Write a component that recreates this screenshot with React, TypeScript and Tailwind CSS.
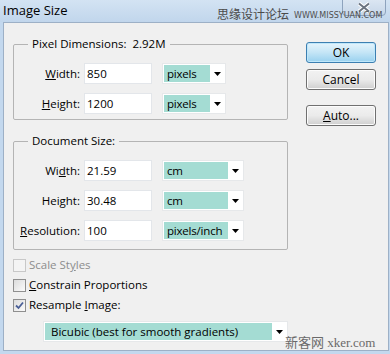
import React from "react";

const font = { fontFamily: '"Open Sans", "Noto Sans CJK SC", sans-serif' };

function Input({ value }: { value: string }) {
  return (
    <div className="w-[68px] h-[21px] bg-white border border-[#e3e6ea] flex items-center pl-[2px] text-[11.5px] text-black leading-none">
      {value}
    </div>
  );
}

function Arrow() {
  return (
    <svg width="7" height="4" viewBox="0 0 7 4" className="block">
      <path d="M0 0H7L3.5 4Z" fill="#000" />
    </svg>
  );
}

function Select({ value, w, tealW }: { value: string; w: string; tealW: string }) {
  return (
    <div className={`${w} h-[21px] bg-white border border-[#e6e8ea] flex items-center p-[1px]`}>
      <div className={`${tealW} h-full bg-[#a4dcd3] flex items-center pl-[3px] text-[11.5px] tracking-[-0.2px] text-black leading-none whitespace-nowrap overflow-hidden`}>
        {value}
      </div>
      <div className="flex-1 flex justify-center items-center pt-[1px]">
        <Arrow />
      </div>
    </div>
  );
}

function Row({ label, value, unit, sw, tw }: { label: React.ReactNode; value: string; unit: string; sw: string; tw: string }) {
  return (
    <div className="flex items-center h-[21px]">
      <div className="w-[70px] text-right text-[11.5px] text-black pr-[4px]">{label}</div>
      <Input value={value} />
      <div className="w-[10px]" />
      <Select value={unit} w={sw} tealW={tw} />
    </div>
  );
}

function Group({ title, children, pb }: { title: string; children: React.ReactNode; pb: string }) {
  return (
    <fieldset className={`w-[275px] border border-[#b4b4b4] rounded-[2px] px-0 ${pb}`}>
      <legend className="ml-[14px] px-[4px] text-[11.5px] leading-[16px] text-black whitespace-pre">{title}</legend>
      <div className="flex flex-col gap-[9px] mt-[11px]">{children}</div>
    </fieldset>
  );
}

function Check({ checked, disabled, children }: { checked?: boolean; disabled?: boolean; children: React.ReactNode }) {
  return (
    <div className="flex items-center h-[20px]">
      <div
        className={`w-[13px] h-[13px] border ${disabled ? "border-[#c8c8c8] bg-[#f4f4f4]" : "border-[#8f8f8f] bg-gradient-to-br from-[#dcdcdc] to-[#fbfbfb]"} flex items-center justify-center`}
      >
        {checked && (
          <svg width="9" height="9" viewBox="0 0 9 9">
            <path d="M1 4.5L3.5 7L8 1.5" stroke="#4a5f97" strokeWidth="1.8" fill="none" />
          </svg>
        )}
      </div>
      <span className={`ml-[3px] text-[11.5px] ${disabled ? "text-[#8d8d8d]" : "text-black"}`}>{children}</span>
    </div>
  );
}

function Btn({ children, def }: { children: React.ReactNode; def?: boolean }) {
  return (
    <div
      className={`w-[70px] h-[21px] rounded-[3px] border flex items-center justify-center text-[12px] text-black ${
        def
          ? "border-[#3c7fb1] bg-gradient-to-b from-[#e5f4fc] via-[#c4e5f6] to-[#98d1ef] shadow-[inset_0_0_0_1px_#bfe7fa]"
          : "border-[#707070] bg-gradient-to-b from-[#f2f2f2] via-[#ebebeb] to-[#cfcfcf] shadow-[inset_0_0_0_1px_#fcfcfc]"
      }`}
    >
      {children}
    </div>
  );
}

export default function App() {
  return (
    <div className="w-[390px] h-[354px] bg-[#c3d8ee] relative overflow-hidden" style={font}>
      {/* title bar */}
      <div className="h-[22px] flex items-start bg-gradient-to-b from-[#d3e3f3] to-[#c1d6ec] relative">
        <span className="ml-[3px] mt-[1px] text-[13px] text-black leading-[18px]">Image Size</span>
        <div className="absolute right-[4px] top-[-1px] w-[44px] h-[17px] rounded-b-[4px] border border-[#8ea3bd] bg-gradient-to-b from-[#dbe6f2] to-[#c6d6e8] flex items-center justify-center">
          <svg width="14" height="11" viewBox="0 0 14 11">
            <path d="M2 1.5L12 9.5M12 1.5L2 9.5" stroke="#fff" strokeWidth="4" />
            <path d="M2 1.5L12 9.5M12 1.5L2 9.5" stroke="#6b7480" strokeWidth="2" />
          </svg>
        </div>
        <div className="absolute left-[217px] top-[5px] flex items-start z-10">
          <span className="text-[12px] text-[#4a4a4a] leading-[18px]" style={{ fontFamily: '"Noto Sans CJK SC", sans-serif' }}>
            思缘设计论坛
          </span>
          <span className="mt-[5px] ml-[5px] text-[8px] text-[#4e4e4e] leading-[12px]" style={{ fontFamily: '"DejaVu Sans", sans-serif' }}>
            WWW.MISSYUAN.COM
          </span>
        </div>
      </div>
      {/* body */}
      <div className="ml-[3px] w-[386px] h-[329px] border border-[#9db0c6] bg-[#f0f0f0] flex">
        <div className="pl-[9px] pt-[13px] flex flex-col">
          <Group title="Pixel Dimensions:  2.92M" pb="pb-[5px]">
            <Row label={<><u>W</u>idth:</>} value="850" unit="pixels" sw="w-[64px]" tw="w-[46px]" />
            <Row label={<><u>H</u>eight:</>} value="1200" unit="pixels" sw="w-[64px]" tw="w-[46px]" />
          </Group>
          <div className="h-[13px]" />
          <Group title="Document Size:" pb="pb-[8px]">
            <Row label={<>Wi<u>d</u>th:</>} value="21.59" unit="cm" sw="w-[82px]" tw="w-[64px]" />
            <Row label={<>Hei<u>g</u>ht:</>} value="30.48" unit="cm" sw="w-[82px]" tw="w-[64px]" />
            <Row label={<><u>R</u>esolution:</>} value="100" unit="pixels/inch" sw="w-[82px]" tw="w-[64px]" />
          </Group>
          <div className="mt-[5px] flex flex-col">
            <Check disabled>
              Scale St<u>y</u>les
            </Check>
            <Check>
              <u>C</u>onstrain Proportions
            </Check>
            <Check checked>
              Resample <u>I</u>mage:
            </Check>
          </div>
          <div className="mt-[6px] ml-[30px]">
            <div className="w-[245px] h-[21px] bg-white border border-[#e6e8ea] flex items-center p-[1px]">
              <div className="w-[227px] h-full bg-[#a4dcd3] flex items-center pl-[6px] text-[11.5px] text-black leading-none">
                Bicubic (best for smooth gradients)
              </div>
              <div className="flex-1 flex justify-center items-center pt-[1px]">
                <Arrow />
              </div>
            </div>
          </div>
        </div>
        <div className="ml-[18px] pt-[19px] flex flex-col">
          <Btn def>OK</Btn>
          <div className="h-[6px]" />
          <Btn>Cancel</Btn>
          <div className="h-[15px]" />
          <Btn>
            <u>A</u>uto...
          </Btn>
        </div>
      </div>
      <div
        className="absolute left-[285px] top-[333px] text-[13px] text-[#6a6a6a]"
        style={{ fontFamily: '"Liberation Serif", "Noto Sans CJK SC", serif' }}
      >
        新客网 xker.com
      </div>
    </div>
  );
}
